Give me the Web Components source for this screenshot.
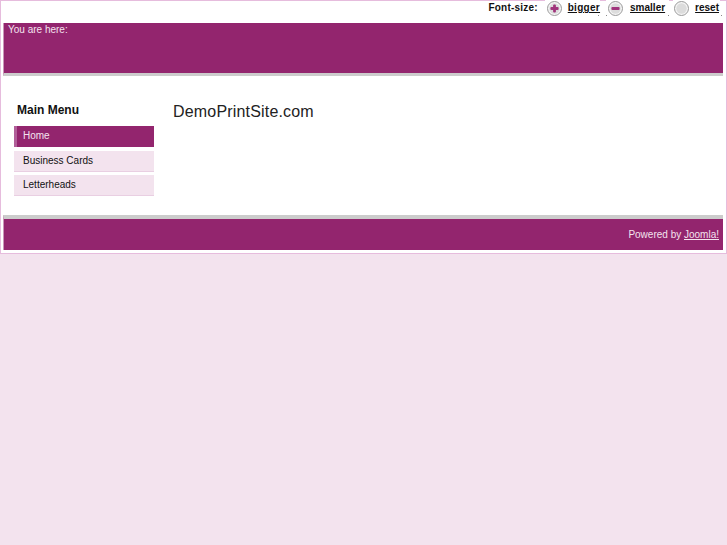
<!DOCTYPE html>
<html>
<head>
<meta charset="utf-8">
<title>DemoPrintSite.com</title>
<style>
  html, body { margin: 0; padding: 0; background: #f3e3ee; }
  body { font-family: "Liberation Sans", Arial, sans-serif; font-size: 10px; color: #111; }
</style>
</head>
<body>
<site-page>
  <font-tools slot="tools"></font-tools>
  <site-band slot="top" kind="top">You are here:</site-band>
  <main-menu slot="side" title="Main Menu">
    <menu-link active>Home</menu-link>
    <menu-link>Business Cards</menu-link>
    <menu-link>Letterheads</menu-link>
  </main-menu>
  <site-title slot="main">DemoPrintSite.com</site-title>
  <site-band slot="bottom" kind="bottom">Powered by <a href="#">Joomla!</a></site-band>
</site-page>

<script>
class SitePage extends HTMLElement {
  constructor() {
    super();
    this.attachShadow({ mode: 'open' }).innerHTML = `
      <style>
        :host { display: block; box-sizing: border-box; width: 727px; height: 254px; background: #fff;
                border: 1px solid #e6bcdd; padding: 0 3px 0 2px; }
        .tools { display: flow-root; height: 22px; }
        .body { display: flex; height: 139px; }
        .side { width: 150px; padding: 27px 0 0 11px; }
        .main { flex: 1; padding: 26px 0 0 9px; }
      </style>
      <div class="tools"><slot name="tools"></slot></div>
      <slot name="top"></slot>
      <div class="body">
        <div class="side"><slot name="side"></slot></div>
        <div class="main"><slot name="main"></slot></div>
      </div>
      <slot name="bottom"></slot>`;
  }
}

class FontTools extends HTMLElement {
  constructor() {
    super();
    const icon = (bar, plus) => `
      <svg width="15" height="15" viewBox="0 0 15 15">
        <circle cx="7.5" cy="7.5" r="7" fill="#f4f4f4" stroke="#9a9a9a" stroke-width="1"/>
        <circle cx="7.5" cy="7.5" r="5.2" fill="#dcdcdc"/>
        ${bar ? '<rect x="3.4" y="6.1" width="8.2" height="2.8" rx="1" fill="#a0357c"/>' : ''}
        ${plus ? '<rect x="6.1" y="3.4" width="2.8" height="8.2" rx="1" fill="#a0357c"/>' : ''}
      </svg>`;
    this.attachShadow({ mode: 'open' }).innerHTML = `
      <style>
        :host { display: flex; justify-content: flex-end; align-items: flex-start; height: 23px; margin-top: -1px;
                padding-right: 3px; font: bold 10px/14px "Liberation Sans", Arial, sans-serif; color: #111; }
        .label { margin: 1px 7px 0 0; letter-spacing: .2px; }
        .group { position: relative; display: flex; align-items: flex-start; background: #fff; height: 17px; padding-top: 1px; box-sizing: border-box; }
        .group a { color: #111; margin-left: 6px; line-height: 14px; }
        svg { display: block; }
        .one { padding-left: 2px; margin-right: 6px; }
        .one a { letter-spacing: .3px; }
        .two { padding: 1px 4px 0 2px; margin-right: 4px; }
        .two a { margin-left: 7px; }
        .three { padding: 1px 1px 0 1px; }
        .dot { position: absolute; top: 15px; width: 1px; height: 1px; background: #8a8a8a; }
      </style>
      <span class="label">Font-size:</span>
      <div class="group one">${icon(true, true)}<a href="#">bigger</a><i class="dot" style="right:1px"></i></div>
      <div class="group two"><i class="dot" style="left:0"></i>${icon(true, false)}<a href="#">smaller</a><i class="dot" style="right:0"></i></div>
      <div class="group three">${icon(false, false)}<a href="#">reset</a><i class="dot" style="right:-2px"></i></div>`;
  }
}

class SiteBand extends HTMLElement {
  constructor() {
    super();
    this.attachShadow({ mode: 'open' }).innerHTML = `
      <style>
        :host { display: block; background: #93256e; color: #f3e3ee; box-sizing: border-box;
                border-left: 1px solid #c995b8;
                font: 10px/12px "Liberation Sans", Arial, sans-serif; }
        :host([kind=top]) { height: 53px; padding: 1px 4px 0; border-bottom: 3px solid #ccc; }
        :host([kind=bottom]) { height: 35px; padding: 10px 4px 0; text-align: right; border-top: 4px solid #ccc; }
        ::slotted(a) { color: #f3e3ee; }
      </style>
      <slot></slot>`;
  }
}

class MainMenu extends HTMLElement {
  constructor() {
    super();
    this.attachShadow({ mode: 'open' }).innerHTML = `
      <style>
        :host { display: block; }
        h3 { margin: 0 0 9px 3px; font: bold 12px/14px "Liberation Sans", Arial, sans-serif; color: #111; }
        .list { display: flex; flex-direction: column; gap: 3.5px; }
      </style>
      <h3>${this.getAttribute('title')}</h3>
      <div class="list"><slot></slot></div>`;
  }
}

class MenuLink extends HTMLElement {
  constructor() {
    super();
    this.attachShadow({ mode: 'open' }).innerHTML = `
      <style>
        :host { display: block; box-sizing: border-box; width: 140px; height: 21px; padding-left: 9px;
                background: #f3e3ee; color: #111; border-bottom: 1px solid #e9cfe2;
                font: 10px/19px "Liberation Sans", Arial, sans-serif; }
        :host([active]) { background: #93256e; color: #f3e3ee; border-left: 3px solid #b15f99; padding-left: 6px; border-bottom: 0; }
      </style>
      <slot></slot>`;
  }
}

class SiteTitle extends HTMLElement {
  constructor() {
    super();
    this.attachShadow({ mode: 'open' }).innerHTML = `
      <style>
        :host { display: block; font: 16px/20px "Liberation Sans", Arial, sans-serif; color: #222; letter-spacing: .18px; }
      </style>
      <slot></slot>`;
  }
}

customElements.define('site-page', SitePage);
customElements.define('font-tools', FontTools);
customElements.define('site-band', SiteBand);
customElements.define('main-menu', MainMenu);
customElements.define('menu-link', MenuLink);
customElements.define('site-title', SiteTitle);
</script>
</body>
</html>
